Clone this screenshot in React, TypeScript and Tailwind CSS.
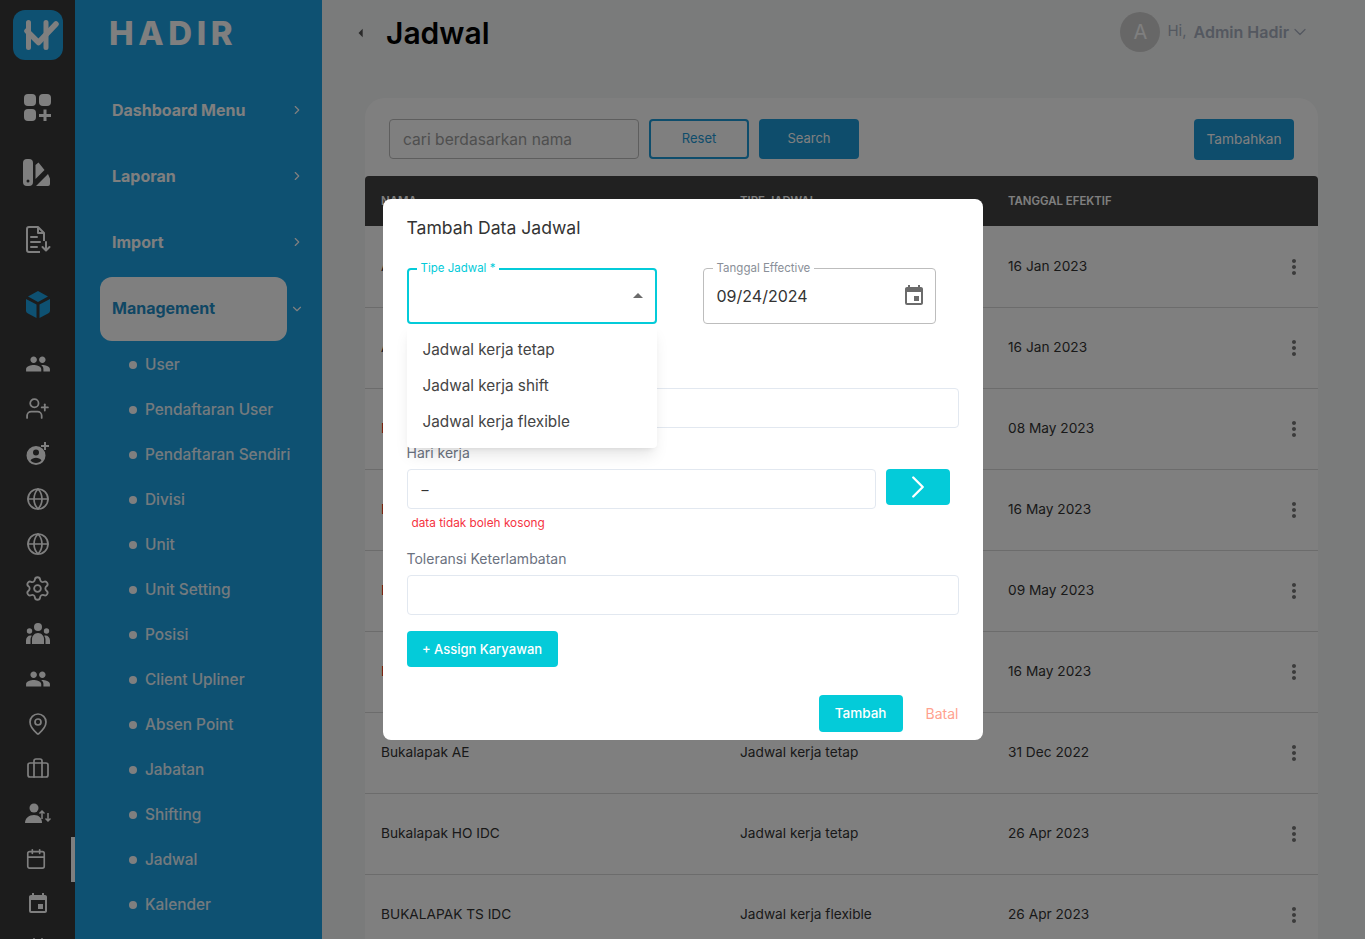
import React from 'react';
import { ChevronRight, ChevronDown, Globe, Settings, MapPin, Briefcase, Calendar, UserPlus } from 'lucide-react';
import { MdPeople, MdEvent, MdMoreVert, MdArrowDropUp, MdArrowLeft } from 'react-icons/md';

const LogoMark = () => (
  <svg width="50" height="50" viewBox="0 0 50 50" fill="none">
    <path d="M15.500 12.500v25M33 12.500v25" stroke="white" strokeWidth="5" strokeLinecap="round" />
    <path d="M14 21l11.500 11.500L43 14" stroke="white" strokeWidth="5.500" strokeLinecap="round" strokeLinejoin="round" />
  </svg>
);

const DashboardIcon = () => (
  <svg width="28" height="28" viewBox="0 0 28 28" fill="white" className="-ml-[2px]">
    <rect x="1" y="1" width="12" height="12" rx="4" />
    <rect x="16" y="1" width="12" height="12" rx="4" />
    <rect x="1" y="16" width="12" height="12" rx="4" />
    <path d="M20.500 16.500h3v4.500h4.500v3H23.500v4.500h-3V24H16v-3h4.500z" />
  </svg>
);

const ReportIcon = () => (
  <svg width="28" height="28" viewBox="0 0 28 28" fill="white" className="-ml-px">
    <rect x="0" y="0" width="10" height="27" rx="4" />
    <circle cx="5" cy="22" r="1.500" fill="#383838" />
    <path d="M12.500 6l3-2.500 6 7.500-9 9z" />
    <path d="M13 27l12-12 1.500 3.500a3 3 0 0 1 .5 2V25a2 2 0 0 1-2 2z" />
  </svg>
);

const ImportIcon = () => (
  <svg width="26" height="28" viewBox="0 0 26 28" fill="none" stroke="white" strokeWidth="2" strokeLinejoin="round">
    <path d="M19 16V8l-6-6H4a2 2 0 0 0-2 2v21a2 2 0 0 0 2 2h11" />
    <path d="M13 2v6h6" />
    <path d="M6 12h6M6 17h9M6 22h6" strokeLinecap="round" />
    <path d="M21 17v8M17.500 22l3.500 3.500 3.500-3.500" strokeLinecap="round" />
  </svg>
);

const CubeIcon = () => (
  <svg width="26" height="28" viewBox="0 0 26 28" fill="#1ca2e4">
    <path d="M13 0l10 5.500-10 5.500L3 5.500z" />
    <path d="M1 8l10.500 5.500V27L3 22.500a3 3 0 0 1-2-2.500z" />
    <path d="M25 8l-10.500 5.500V27L23 22.500a3 3 0 0 0 2-2.500z" />
  </svg>
);

const AccountPlusIcon = () => (
  <svg width="24" height="24" viewBox="0 0 24 24" fill="white">
    <path fillRule="evenodd" d="M10 4a9.500 9.500 0 1 0 0 19 9.500 9.500 0 0 0 0-19zm0 3.500a3 3 0 1 1 0 6 3 3 0 0 1 0-6zm0 13.500c-2.300 0-4.300-1-5.500-2.700 1-1.600 3.500-2.500 5.500-2.500s4.500.9 5.500 2.500C14.300 20 12.300 21 10 21z" />
    <path d="M18 0h2v3h3v2h-3v3h-2V5h-3V3h3z" />
  </svg>
);

const GroupsIcon = () => (
  <svg width="24" height="22" viewBox="0 0 24 22" fill="white">
    <circle cx="12" cy="4" r="4" />
    <circle cx="3.500" cy="8" r="2.700" />
    <circle cx="20.500" cy="8" r="2.700" />
    <path d="M6 21v-5c0-3 2.500-6 6-6s6 3 6 6v5z" />
    <path d="M0 21v-3.500c0-3 2-5 4.500-5 .5 0 1 .1 1.300.2A8 8 0 0 0 4.500 16v5zM24 21v-3.500c0-3-2-5-4.500-5-.5 0-1 .1-1.300.2a8 8 0 0 1 1.300 3.300v5z" />
  </svg>
);

const PersonSwapIcon = () => (
  <svg width="26" height="24" viewBox="0 0 26 24" fill="none">
    <circle cx="9" cy="6" r="4.500" fill="white" />
    <path d="M0 21c0-5 4-8 9-8s8 3 8 8z" fill="white" />
    <path d="M17 17V9M14.500 11.500L17 9l2.500 2.500M23 11v8M20.500 16.500L23 19l2.500-2.500" stroke="white" strokeWidth="1.500" />
  </svg>
);

const railIcons: React.ReactNode[] = [
  <MdPeople key="people" size={26} color="white" />,
  <UserPlus key="add" size={25} color="white" strokeWidth={1.7} />,
  <AccountPlusIcon key="account" />,
  <Globe key="g1" size={24} color="white" strokeWidth={1.7} />,
  <Globe key="g2" size={24} color="white" strokeWidth={1.7} />,
  <Settings key="set" size={27} color="white" strokeWidth={1.6} />,
  <GroupsIcon key="groups" />,
  <MdPeople key="people2" size={26} color="white" />,
  <MapPin key="pin" size={24} color="white" strokeWidth={1.7} />,
  <Briefcase key="brief" size={24} color="white" strokeWidth={1.7} />,
  <PersonSwapIcon key="swap" />,
  <span key="cal" className="-ml-1"><Calendar size={22} color="white" strokeWidth={1.8} /></span>,
  <MdEvent key="event" size={24} color="white" />,
  <Calendar key="partial" size={24} color="white" strokeWidth={2} />,
];

const subMenu = ['User', 'Pendaftaran User', 'Pendaftaran Sendiri', 'Divisi', 'Unit', 'Unit Setting', 'Posisi', 'Client Upliner', 'Absen Point', 'Jabatan', 'Shifting', 'Jadwal', 'Kalender'];

// the first six rows sit behind the dialog, only the edge of the first letter shows
const rows = [
  ['A', '', '16 Jan 2023', 'text-[#333333]'],
  ['A', '', '16 Jan 2023', 'text-[#333333]'],
  ['B', '', '08 May 2023', 'text-[#f01414]'],
  ['B', '', '16 May 2023', 'text-[#f01414]'],
  ['B', '', '09 May 2023', 'text-[#f01414]'],
  ['B', '', '16 May 2023', 'text-[#f01414]'],
  ['Bukalapak AE', 'Jadwal kerja tetap', '31 Dec 2022', 'text-[#333333]'],
  ['Bukalapak HO IDC', 'Jadwal kerja tetap', '26 Apr 2023', 'text-[#333333]'],
  ['BUKALAPAK TS IDC', 'Jadwal kerja flexible', '26 Apr 2023', 'text-[#333333]'],
];

const Rail = () => (
  <aside className="w-[75px] shrink-0 bg-[#383838] flex flex-col overflow-hidden">
    <div className="mt-[10px] ml-[13px] w-[50px] h-[50px] shrink-0 rounded-xl bg-[#1ca2e4]">
      <LogoMark />
    </div>
    <div className="mt-[14px]">
      {[<DashboardIcon key="d" />, <ReportIcon key="r" />, <ImportIcon key="i" />, <CubeIcon key="c" />].map((icon, i) => (
        <div key={i} className="h-[66px] flex items-center justify-center">{icon}</div>
      ))}
    </div>
    <div className="mt-[4px]">
      {railIcons.map((icon, i) => (
        <div key={i} className="relative h-[45px] pb-0.5 flex items-center justify-center">
          {icon}
          {i === 11 && <span className="absolute right-0 top-0 w-1 h-[45px] bg-white" />}
        </div>
      ))}
    </div>
  </aside>
);

const Sidebar = () => (
  <aside className="w-[247px] shrink-0 bg-[#1ca2e4] overflow-hidden">
    <div className="h-[77px] pl-[34px] pt-[10px]">
      <span className="text-white font-extrabold text-[33px] leading-[46px] tracking-[0.14em]">HADIR</span>
    </div>
    {['Dashboard Menu', 'Laporan', 'Import'].map(label => (
      <div key={label} className="h-[66px] pl-[37px] pr-[18px] flex items-center justify-between text-white">
        <span className="text-[16px] font-bold">{label}</span>
        <ChevronRight size={14} />
      </div>
    ))}
    <div className="mt-[2px] flex items-center">
      <div className="ml-[25px] w-[187px] h-[64px] pb-0.5 rounded-xl bg-white flex items-center pl-[12px]">
        <span className="text-[16px] font-bold text-[#1f8ec9]">Management</span>
      </div>
      <ChevronDown size={14} color="white" className="ml-[3px]" />
    </div>
    <div className="mt-[1px]">
      {subMenu.map(item => (
        <div key={item} className="h-[45px] pl-[54px] flex items-center gap-2 text-white">
          <span className="w-2 h-2 rounded-full bg-white" />
          <span className="text-[15.4px] font-medium opacity-90">{item}</span>
        </div>
      ))}
    </div>
  </aside>
);

const Main = () => (
  <main className="flex-1 min-w-0 bg-[#f5f7f7] overflow-hidden">
    <header className="h-[65px] flex items-center pl-[34px] pr-[55px] justify-between">
      <div className="flex items-center">
        <MdArrowLeft size={20} className="text-[#555555] -ml-[5px]" />
        <h1 className="ml-[15px] pt-px text-[30px] font-semibold text-black">Jadwal</h1>
      </div>
      <div className="flex items-center mb-[2px]">
        <div className="w-10 h-10 rounded-full bg-[#cfcfcf] text-white text-[20px] flex items-center justify-center">A</div>
        <span className="ml-[7px] text-[15px] text-[#a8b0c0]">Hi,</span>
        <span className="ml-[7px] text-[16px] font-semibold text-[#a8b0c0]">Admin Hadir</span>
        <ChevronDown size={20} strokeWidth={1.5} className="ml-[1px] text-[#a8b0c0]" />
      </div>
    </header>
    <section className="mt-[33px] ml-[43px] w-[953px] bg-white rounded-t-[20px]">
      <div className="h-[78px] pt-[21px] px-6 flex items-start">
        <div className="w-[250px] h-10 pt-px border border-[#bdbdbd] rounded flex items-center pl-[13px] text-[15.6px] text-[#9e9e9e]">cari berdasarkan nama</div>
        <button className="ml-[10px] w-[100px] h-10 border-2 border-[#1c9ad8] rounded text-[13px] text-[#1c9ad8]">Reset</button>
        <button className="ml-[10px] w-[100px] h-10 bg-[#1c9ad8] rounded text-[13px] text-white">Search</button>
        <button className="ml-auto w-[100px] h-[41px] bg-[#1c9ad8] rounded text-[13.7px] text-white">Tambahkan</button>
      </div>
      <div className="h-[50px] pt-0.5 bg-[#424242] rounded-t flex items-center text-[11.4px] font-semibold text-white">
        <span className="w-[375px] pl-4">NAMA</span>
        <span className="w-[268px]">TIPE JADWAL</span>
        <span>TANGGAL EFEKTIF</span>
      </div>
      <div className="pt-px">
        {rows.map(([name, type, date, tone], i) => (
          <div key={i} className="relative h-[81px] border-b border-[#d9d9d9] flex items-center text-[13.7px] text-[#333333]">
            <span className={`w-[375px] pl-4 pb-0.5 ${tone}`}>{name}</span>
            <span className="w-[268px] pb-0.5">{type}</span>
            <span className="flex-1 pb-0.5">{date}</span>
            <MdMoreVert size={24} className="mr-[12px] text-[#777777]" />
          </div>
        ))}
      </div>
    </section>
  </main>
);

const Modal = () => (
  <div className="w-[600px] h-[541px] mx-auto mt-[199px] bg-white rounded-lg px-6 pt-[17px] text-[#333333]">
    <h2 className="text-[17.6px] leading-6 font-normal">Tambah Data Jadwal</h2>
    <div className="mt-[28px] flex gap-[46px]">
      <div className="relative w-[250px] h-14 border-2 border-[#04cbd9] rounded flex items-center justify-end pr-[5px]">
        <span className="absolute -top-[10px] left-[8px] bg-white px-1 text-[11.5px] leading-4 text-[#04cbd9]">Tipe Jadwal *</span>
        <MdArrowDropUp size={24} className="text-[#6b6b6b]" />
        <ul className="absolute z-10 -left-[2px] top-[54px] w-[250px] py-2 bg-white rounded shadow-lg text-[15.3px] text-[#444444]">
          <li className="h-9 pl-4 flex items-center">Jadwal kerja tetap</li>
          <li className="h-9 pl-4 flex items-center">Jadwal kerja shift</li>
          <li className="h-9 pl-4 flex items-center">Jadwal kerja flexible</li>
        </ul>
      </div>
      <div className="relative w-[233px] h-14 border border-[#bdbdbd] rounded flex items-center justify-between pl-[13px] pr-[9px]">
        <span className="absolute -top-[9px] left-[9px] bg-white px-1 text-[11.5px] leading-4 text-[#8a8f98]">Tanggal Effective</span>
        <span className="pb-px text-[16px]">09/24/2024</span>
        <MdEvent size={24} className="text-[#6b6b6b]" />
      </div>
    </div>
    <div className="mt-[64px] h-10 border border-[#e2e8f0] rounded" />
    <label className="block mt-[15px] h-[26px] text-[14px] leading-5 text-[#6b7280]">Hari kerja</label>
    <div className="flex items-start gap-[10px]">
      <div className="w-[469px] h-10 border border-[#e2e8f0] rounded flex items-center pl-[14px] text-[14px]">–</div>
      <button className="w-16 h-9 bg-[#04cbd9] rounded flex items-center justify-center">
        <ChevronRight size={38} color="white" strokeWidth={1.5} />
      </button>
    </div>
    <p className="mt-[6px] ml-[5px] text-[11.8px] leading-4 text-[#f5333f]">data tidak boleh kosong</p>
    <label className="block mt-[18px] h-[26px] text-[14px] leading-5 text-[#6b7280]">Toleransi Keterlambatan</label>
    <div className="h-10 border border-[#e2e8f0] rounded" />
    <button className="mt-4 w-[151px] h-9 pt-px bg-[#04cbd9] rounded text-[13px] font-medium text-white">+ Assign Karyawan</button>
    <div className="mt-7 flex items-center justify-end gap-[23px]">
      <button className="w-[84px] h-[37px] bg-[#04cbd9] rounded text-[13.5px] font-medium text-white">Tambah</button>
      <button className="pb-px text-[14px] text-[#ffa28f]">Batal</button>
    </div>
  </div>
);

export default function App() {
  return (
    <div className="relative flex h-screen overflow-hidden font-['Inter','Liberation_Sans',sans-serif]">
      <Rail />
      <Sidebar />
      <Main />
      <div className="absolute inset-0 bg-black/50">
        <Modal />
      </div>
    </div>
  );
}
